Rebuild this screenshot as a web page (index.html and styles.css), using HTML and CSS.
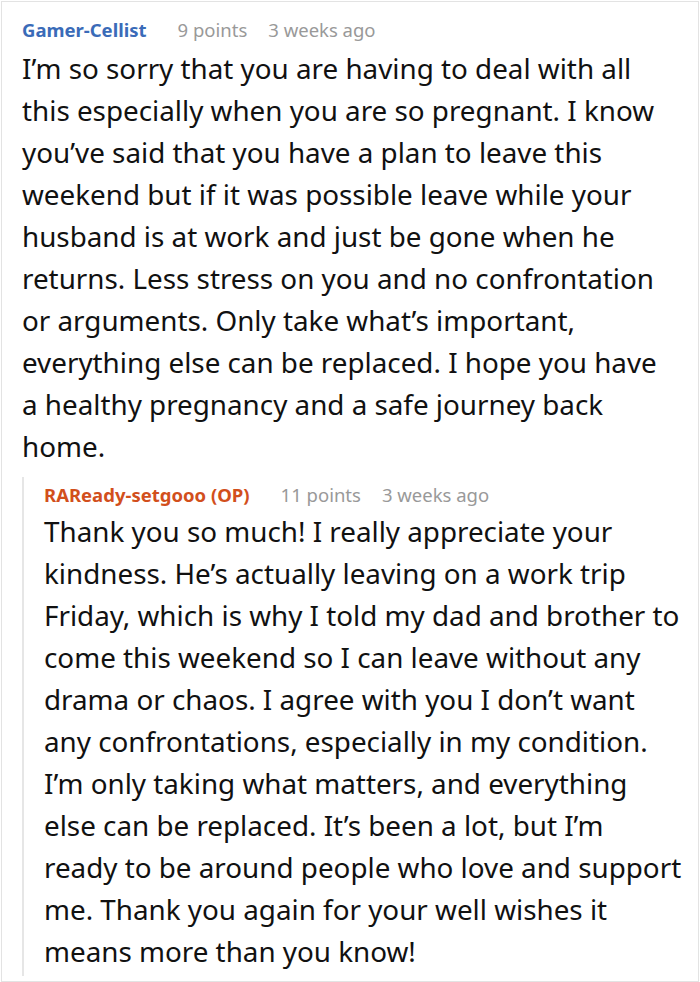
FILE: index.html
```html
<!DOCTYPE html>
<html>
<head>
<meta charset="utf-8">
<link rel="stylesheet" href="styles.css">
</head>
<body>
<div class="frame">
  <div class="comment">
    <div class="meta">
      <span class="user user-blue">Gamer-Cellist</span>
      <span class="info">9 points</span>
      <span class="info">3 weeks ago</span>
    </div>
    <p class="text text-main">I’m so sorry that you are having to deal with all this especially when you are so pregnant. I know you’ve said that you have a plan to leave this weekend but if it was possible leave while your husband is at work and just be gone when he returns. Less stress on you and no confrontation or arguments. Only take what’s important, everything else can be replaced. I hope you have a healthy pregnancy and a safe journey back home.</p>
    <div class="reply">
      <div class="meta meta-reply">
        <span class="user user-orange">RAReady-setgooo (OP)</span>
        <span class="info">11 points</span>
        <span class="info">3 weeks ago</span>
      </div>
      <p class="text text-reply">Thank you so much! I really appreciate your kindness. He’s actually leaving on a work trip Friday, which is why I told my dad and brother to come this weekend so I can leave without any drama or chaos. I agree with you I don’t want any confrontations, especially in my condition. I’m only taking what matters, and everything else can be replaced. It’s been a lot, but I’m ready to be around people who love and support me. Thank you again for your well wishes it means more than you know!</p>
    </div>
  </div>
</div>
</body>
</html>
```
FILE: styles.css
```css
html, body {
  margin: 0;
  padding: 0;
  background: #fff;
}
body {
  font-family: "Noto Sans", "Open Sans", sans-serif;
  color: #111;
}
.frame {
  box-sizing: border-box;
  width: 698px;
  height: 981px;
  margin: 1px 0 0 1px;
  border: 1px solid #e3e3e3;
  overflow: hidden;
}
.comment {
  padding: 14px 0 0 20px;
}
.meta {
  display: flex;
  align-items: baseline;
  gap: 31px;
  font-size: 18.5px;
  line-height: 28px;
  margin-bottom: 3px;
}
.meta-reply {
  margin-bottom: 1px;
}
.info {
  color: #999;
  font-weight: 400;
}
.meta .info + .info {
  margin-left: -10px;
}
.user {
  font-weight: 700;
}
.user-blue {
  color: #3a6bb8;
}
.user-orange {
  color: #d24f1c;
}
.text {
  margin: 0;
  font-size: 27.8px;
  line-height: 42px;
}
.text-main {
  padding-right: 27px;
}
.text-reply {
  padding-right: 14px;
}
.reply {
  margin-top: 10px;
  border-left: 2px solid #e6e6e6;
  padding: 4px 0 4px 20px;
}
```
